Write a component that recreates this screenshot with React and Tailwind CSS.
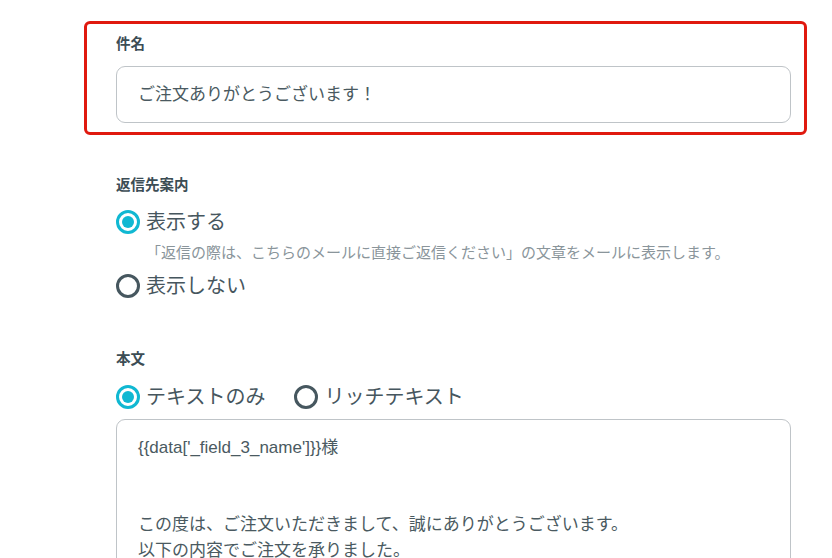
import React from 'react';

const Radio = ({ checked, label }) => (
  <label className="flex items-center h-[32px]">
    {checked ? (
      <span className="w-[24px] h-[24px] rounded-full border-[3px] border-[#10b8d2] flex items-center justify-center">
        <span className="w-[12px] h-[12px] rounded-full bg-[#10b8d2]" />
      </span>
    ) : (
      <span className="w-[24px] h-[24px] rounded-full border-[3px] border-[#46575f]" />
    )}
    <span className="ml-[6px] text-[20px] text-[#46565e] leading-none">{label}</span>
  </label>
);

const App = () => {
  return (
    <div className="w-[832px] h-[558px] overflow-hidden bg-white font-['Liberation_Sans','Noto_Sans_CJK_JP',sans-serif]">
      {/* highlighted subject field */}
      <div className="mt-[21px] ml-[84px] w-[723px] border-[3px] border-[#e0190f] rounded-[6px] pl-[29px] pr-[13px] pt-[10px] pb-[9px]">
        <div className="text-[14.5px] leading-[20px] font-bold text-[#3c4d55]">件名</div>
        <div className="mt-[12px] h-[57px] border border-[#bfc4c8] rounded-[9px] flex items-center pl-[21px] text-[17px] text-[#4a5a61]">
          ご注文ありがとうございます！
        </div>
      </div>

      <div className="ml-[116px] w-[675px]">
        <div className="mt-[40px] text-[14.5px] leading-[20px] font-bold text-[#3c4d55]">返信先案内</div>
        <div className="mt-[11px]">
          <Radio checked label="表示する" />
        </div>
        <div className="mt-[5px] pl-[30px] text-[15px] leading-[20px] text-[#8a959b]">
          「返信の際は、こちらのメールに直接ご返信ください」の文章をメールに表示します。
        </div>
        <div className="mt-[7px]">
          <Radio label="表示しない" />
        </div>

        <div className="mt-[47px] text-[14.5px] leading-[20px] font-bold text-[#3c4d55]">本文</div>
        <div className="mt-[12px] flex gap-[29px]">
          <Radio checked label="テキストのみ" />
          <Radio label="リッチテキスト" />
        </div>
        <div className="mt-[6px] h-[200px] border border-[#bfc4c8] rounded-[9px] pl-[21px] pt-[15px] text-[17px] leading-[26px] text-[#4a5a61]">
          <div>{"{{data['_field_3_name']}}様"}</div>
          <div className="mt-[51px]">この度は、ご注文いただきまして、誠にありがとうございます。</div>
          <div>以下の内容でご注文を承りました。</div>
        </div>
      </div>
    </div>
  );
};

export default App;
